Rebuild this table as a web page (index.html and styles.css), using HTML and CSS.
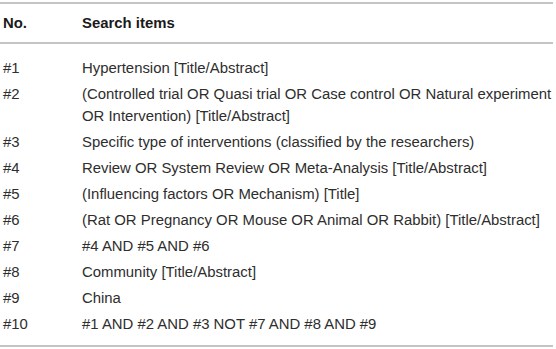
FILE: index.html
```html
<!DOCTYPE html>
<html>
<head>
<meta charset="utf-8">
<link rel="stylesheet" href="styles.css">
</head>
<body>
<div class="wrap">
<table class="search-table">
  <thead>
    <tr><th class="c-no">No.</th><th class="c-item">Search items</th></tr>
  </thead>
  <tbody>
    <tr class="first"><td class="c-no">#1</td><td class="c-item">Hypertension [Title/Abstract]</td></tr>
    <tr><td class="c-no">#2</td><td class="c-item">(Controlled trial OR Quasi trial OR Case control OR Natural experiment<br>OR Intervention) [Title/Abstract]</td></tr>
    <tr><td class="c-no">#3</td><td class="c-item">Specific type of interventions (classified by the researchers)</td></tr>
    <tr><td class="c-no">#4</td><td class="c-item">Review OR System Review OR Meta-Analysis [Title/Abstract]</td></tr>
    <tr><td class="c-no">#5</td><td class="c-item">(Influencing factors OR Mechanism) [Title]</td></tr>
    <tr><td class="c-no">#6</td><td class="c-item">(Rat OR Pregnancy OR Mouse OR Animal OR Rabbit) [Title/Abstract]</td></tr>
    <tr><td class="c-no">#7</td><td class="c-item">#4 AND #5 AND #6</td></tr>
    <tr><td class="c-no">#8</td><td class="c-item">Community [Title/Abstract]</td></tr>
    <tr><td class="c-no">#9</td><td class="c-item">China</td></tr>
    <tr class="last"><td class="c-no">#10</td><td class="c-item">#1 AND #2 AND #3 NOT #7 AND #8 AND #9</td></tr>
  </tbody>
</table>
</div>
</body>
</html>
```
FILE: styles.css
```css
html, body {
  margin: 0;
  padding: 0;
  background: #ffffff;
}
.wrap {
  padding-top: 2px;
  width: 553px;
}
.search-table {
  width: 553px;
  table-layout: fixed;
  border-collapse: collapse;
  font-family: "Liberation Sans", Arial, sans-serif;
  font-size: 14.9px;
  color: #2e2e2e;
  border-top: 2px solid #c4c4c4;
  border-bottom: 2px solid #c4c4c4;
}
.search-table th {
  text-align: left;
  font-weight: bold;
  color: #1a1a1a;
  height: 38px;
  padding: 0 0 0 3px;
  border-bottom: 2px solid #c4c4c4;
  vertical-align: middle;
}
.search-table td {
  vertical-align: top;
  line-height: 22px;
  padding: 2px 0 2px 3px;
  white-space: nowrap;
}
.search-table .c-no {
  width: 76px;
}
.search-table tr.first td {
  padding-top: 13px;
}
.search-table tr.last td {
  padding-bottom: 10px;
}
```
